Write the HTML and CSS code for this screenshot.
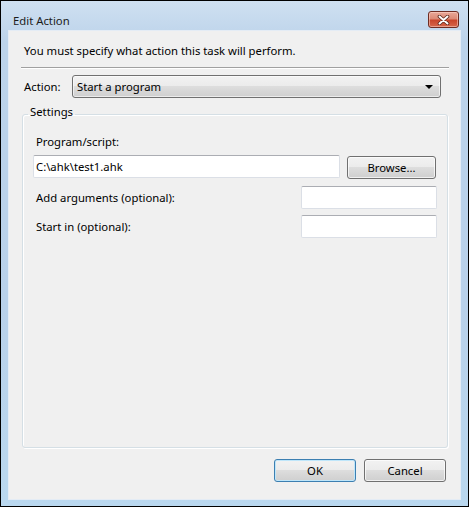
FILE: index.html
```html
<!DOCTYPE html>
<html lang="en">
<head>
  <meta charset="UTF-8">
  <title>Edit Action</title>
  <link rel="stylesheet" href="styles.css">
</head>
<body>
  <div class="window">
    <div class="titlebar">
      <span class="title">Edit Action</span>
      <button class="close" type="button" aria-label="Close">
        <svg width="13" height="10" viewBox="0 0 13 10">
          <path d="M2.5 1.5 L10.5 8.5 M10.5 1.5 L2.5 8.5" stroke="#5a2418" stroke-width="3.6" stroke-linecap="round"/>
          <path d="M2.5 1.5 L10.5 8.5 M10.5 1.5 L2.5 8.5" stroke="#fff" stroke-width="2" stroke-linecap="round"/>
        </svg>
      </button>
    </div>

    <div class="client">
      <p class="intro">You must specify what action this task will perform.</p>
      <div class="separator"></div>

      <div class="action-row">
        <label for="action">Action:</label>
        <div class="combo" id="action">
          <span>Start a program</span>
          <span class="arrow"></span>
        </div>
      </div>

      <fieldset class="settings">
        <legend>Settings</legend>
        <div class="group-body">
          <div class="field-label">Program/script:</div>
          <div class="path-row">
            <input class="textbox path" type="text" value="C:\ahk\test1.ahk">
            <button class="btn browse" type="button">Browse...</button>
          </div>
          <div class="opt-row">
            <span>Add arguments (optional):</span>
            <input class="textbox short" type="text">
          </div>
          <div class="opt-row">
            <span>Start in (optional):</span>
            <input class="textbox short" type="text">
          </div>
        </div>
      </fieldset>

      <div class="buttons">
        <button class="btn default" type="button">OK</button>
        <button class="btn" type="button">Cancel</button>
      </div>
    </div>
  </div>
</body>
</html>
```

FILE: styles.css
```css
body {
  margin: 0;
  background: #fff;
  font-family: "Noto Sans", "Open Sans", sans-serif;
  font-size: 11.3px;
  line-height: 15px;
  color: #000;
}

.window {
  width: 469px;
  height: 507px;
  box-sizing: border-box;
  border: 1px solid #000;
  display: flex;
  flex-direction: column;
  background: linear-gradient(to bottom, #cfe0f1 0%, #bcd3ea 8%, #b9d1ea 60%, #bad8ef 100%);
}

.titlebar {
  height: 29px;
  display: flex;
  justify-content: space-between;
  align-items: flex-start;
  padding: 0 9px 0 12px;
}

.title {
  padding-top: 12px;
  color: #1b1b1b;
}

.close {
  width: 31px;
  height: 17px;
  margin-top: 10px;
  padding: 0;
  border: 1px solid #6e2c22;
  border-radius: 3px;
  background: linear-gradient(to bottom, #e9a898 0%, #dc8a76 45%, #c9452b 55%, #d6674c 100%);
  box-shadow: inset 0 0 0 1px rgba(255, 220, 210, 0.5);
  display: flex;
  align-items: center;
  justify-content: center;
}

.client {
  flex: 1;
  margin: 0 7px 6px;
  border: 1px solid #e4ecf5;
  background: #f0f0f0;
  display: flex;
  flex-direction: column;
  padding: 12px 0 17px;
}

.intro {
  margin: 0;
  padding-left: 15px;
}

.separator {
  margin: 9px 11px 0 12px;
  height: 1px;
  background: #a0a0a0;
  border-bottom: 1px solid #fff;
}

.action-row {
  display: flex;
  align-items: center;
  margin-top: 6px;
  padding: 0 19px 0 15px;
}

.action-row label {
  width: 48px;
}

.combo {
  flex: 1;
  height: 23px;
  box-sizing: border-box;
  border: 1px solid #707070;
  border-radius: 3px;
  background: linear-gradient(to bottom, #f2f2f2 0%, #ebebeb 50%, #dddddd 50%, #cfcfcf 100%);
  box-shadow: inset 0 0 0 1px rgba(255, 255, 255, 0.6);
  display: flex;
  align-items: center;
  justify-content: space-between;
  padding: 0 7px 0 4px;
}

.arrow {
  width: 0;
  height: 0;
  border-left: 4px solid transparent;
  border-right: 4px solid transparent;
  border-top: 4px solid #000;
}

.settings {
  flex: 1;
  margin: 6px 12px 0 13px;
  padding: 0;
  min-width: 0;
  border: 1px solid #d5dfe5;
  border-radius: 3px;
  box-shadow: inset 1px 1px 0 #fff, 1px 1px 0 #fff;
}

.settings legend {
  margin-left: 5px;
  padding: 0 2px 6px;
}

.group-body {
  padding: 9px 10px 0;
}

.field-label {
  margin-left: 3px;
}

.path-row {
  display: flex;
  align-items: flex-start;
  gap: 7px;
  margin-top: 6px;
}

.textbox {
  height: 23px;
  box-sizing: border-box;
  border: 1px solid #dbdfe6;
  border-top-color: #abadb3;
  border-radius: 2px;
  background: #fff;
  font: inherit;
  color: #000;
  padding: 0 2px;
  outline: none;
}

.path {
  width: 307px;
}

.short {
  width: 136px;
}

.btn {
  height: 23px;
  box-sizing: border-box;
  border: 1px solid #707070;
  border-radius: 3px;
  background: linear-gradient(to bottom, #f2f2f2 0%, #ebebeb 50%, #dddddd 50%, #cfcfcf 100%);
  box-shadow: inset 0 0 0 1px rgba(255, 255, 255, 0.7);
  font: inherit;
  color: #000;
  padding: 0;
}

.browse {
  width: 89px;
  margin-top: 1px;
}

.opt-row {
  display: flex;
  align-items: center;
  justify-content: space-between;
  margin-top: 7px;
  padding-left: 3px;
}

.opt-row + .opt-row {
  margin-top: 6px;
}

.buttons {
  display: flex;
  justify-content: flex-end;
  gap: 8px;
  margin-top: 11px;
  padding-right: 14px;
}

.buttons .btn {
  width: 82px;
}

.btn.default {
  border-color: #3c7fb1;
  box-shadow: inset 0 0 0 1px #bfe6fa;
}
```
